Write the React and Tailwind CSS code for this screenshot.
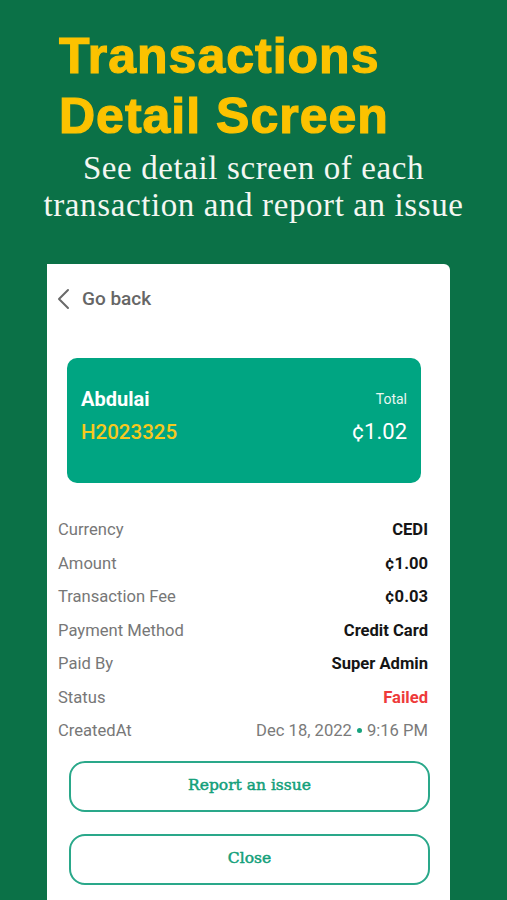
const rows = [
  { label: "Currency", value: "CEDI" },
  { label: "Amount", value: "¢1.00" },
  { label: "Transaction Fee", value: "¢0.03" },
  { label: "Payment Method", value: "Credit Card" },
  { label: "Paid By", value: "Super Admin" },
  { label: "Status", value: "Failed", tone: "text-[#ee3b3b]" },
];

export default function App() {
  return (
    <div className="w-[507px] h-[900px] overflow-hidden bg-[#0b7147] flex flex-col">
      {/* Header */}
      <h1
        className="pt-[26px] pl-[59px] text-[50px] leading-[60px] font-bold tracking-[1px] text-[#fcc200] [-webkit-text-stroke:1.2px_#fcc200]"
        style={{ fontFamily: '"Liberation Sans", Arial, sans-serif' }}
      >
        Transactions
        <br />
        Detail Screen
      </h1>
      <p
        className="mt-[4px] text-center text-[33px] leading-[37px] tracking-[0.6px] text-[#f4f7f2]"
        style={{ fontFamily: '"Liberation Serif", "Times New Roman", serif' }}
      >
        See detail screen of each
        <br />
        transaction and report an issue
      </p>

      {/* Phone panel */}
      <div
        className="mt-[40px] ml-[47px] w-[403px] flex-1 bg-white rounded-tr-[6px]"
        style={{ fontFamily: "Roboto, Arial, sans-serif" }}
      >
        <div className="pt-[23px] pl-[9px] flex items-center gap-[10px] text-[#666666]">
          <svg
            width="16"
            height="24"
            viewBox="0 0 16 24"
            fill="none"
            stroke="#6a6a6a"
            strokeWidth="2"
            strokeLinecap="round"
            strokeLinejoin="round"
          >
            <polyline points="12,3 3,12 12,21" />
          </svg>
          <span className="text-[19px] leading-[24px] font-medium">Go back</span>
        </div>

        {/* Summary card */}
        <div className="mt-[47px] ml-[20px] w-[354px] h-[125px] rounded-[10px] bg-[#00a582] px-[14px] pt-[29px] flex flex-col gap-[8px]">
          <div className="flex items-center justify-between">
            <span className="text-[20px] leading-[24px] font-bold text-white">Abdulai</span>
            <span className="text-[14px] leading-[24px] text-[#e8f7f1]">Total</span>
          </div>
          <div className="flex items-center justify-between">
            <span className="text-[20.5px] leading-[26px] font-medium text-[#f7c81e]">H2023325</span>
            <span className="text-[22px] leading-[26px] text-white">¢1.02</span>
          </div>
        </div>

        {/* Details */}
        <div className="mt-[30px] pl-[11px] pr-[22px] text-[16.6px] leading-[33.5px]">
          {rows.map((r) => (
            <div key={r.label} className="flex justify-between">
              <span className="text-[#777777]">{r.label}</span>
              <span className={`font-bold ${r.tone || "text-[#151515]"}`}>{r.value}</span>
            </div>
          ))}
          <div className="flex justify-between">
            <span className="text-[#777777]">CreatedAt</span>
            <span className="flex items-center gap-[5px] text-[#7a7a7a]">
              Dec 18, 2022
              <span className="w-[5px] h-[5px] rounded-full bg-[#17a37e]" />
              9:16 PM
            </span>
          </div>
        </div>

        {/* Actions */}
        <div
          className="mt-[13px] ml-[22px] w-[361px] flex flex-col gap-[22px]"
          style={{ fontFamily: '"DejaVu Serif", "Liberation Serif", serif' }}
        >
          <button className="h-[51px] rounded-[16px] border-2 border-[#2aa88a] text-[15.5px] font-normal text-[#12a07a] [-webkit-text-stroke:0.5px_#12a07a]">
            Report an issue
          </button>
          <button className="h-[51px] rounded-[16px] border-2 border-[#2aa88a] text-[15.5px] font-normal text-[#12a07a] [-webkit-text-stroke:0.5px_#12a07a]">
            Close
          </button>
        </div>
      </div>
    </div>
  );
}
